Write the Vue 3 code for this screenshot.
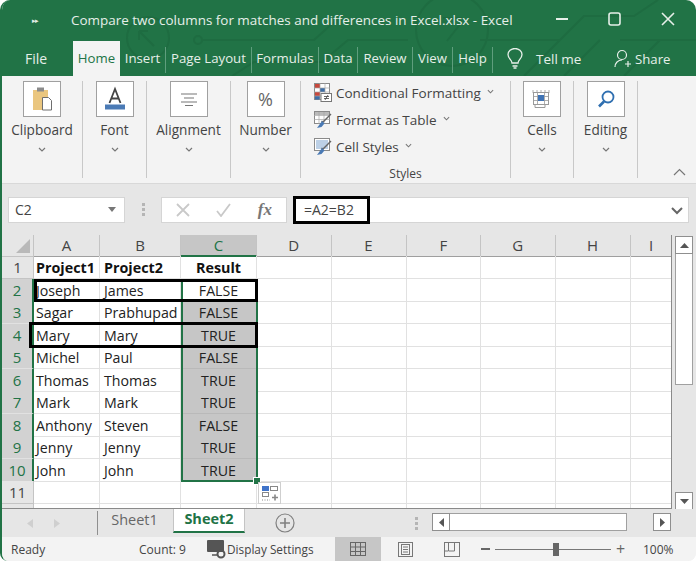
<script setup>
const tabs = ['Insert', 'Page Layout', 'Formulas', 'Data', 'Review', 'View', 'Help']
const headers = ['A', 'B', 'C', 'D', 'E', 'F', 'G', 'H', 'I']
const data = [
  ['Project1', 'Project2', 'Result'],
  ['Joseph', 'James', 'FALSE'],
  ['Sagar', 'Prabhupad', 'FALSE'],
  ['Mary', 'Mary', 'TRUE'],
  ['Michel', 'Paul', 'FALSE'],
  ['Thomas', 'Thomas', 'TRUE'],
  ['Mark', 'Mark', 'TRUE'],
  ['Anthony', 'Steven', 'FALSE'],
  ['Jenny', 'Jenny', 'TRUE'],
  ['John', 'John', 'TRUE'],
  ['', '', ''],
  ['', '', '']
]
const empties = [0, 1, 2, 3, 4, 5]
</script>

<template>
  <div class="window">
    <header class="chrome">
      <svg class="pattern" width="696" height="76" viewBox="0 0 696 76" fill="none" stroke="#1e6c41" stroke-width="2">
        <circle cx="148" cy="38" r="21" />
        <path d="M140 32l14 14M139 31h9M139 31v9" />
        <circle cx="198" cy="40" r="4" />
        <path d="M202 40h112l20 -18M232 76l22-14h68l26-22h60M348 40h50" />
        <circle cx="452" cy="30" r="36" />
        <path d="M443 18h18v5l-14 18M480 40h80l24-24h50l24-16M560 40l-36 36M600 40l-36 36M620 40h76M660 40l-36 36" />
      </svg>
      <div class="titlebar">
        <span class="qat">▸▸</span>
        <span class="doc">Compare two columns for matches and differences in Excel.xlsx  -  Excel</span>
        <svg class="winbtns" width="140" height="22" viewBox="0 0 140 22" fill="none" stroke="#e6efe9" stroke-width="1.6">
          <path d="M0 11h12" stroke-width="2" />
          <rect x="53" y="5" width="11" height="12" rx="2" />
          <path d="M106 5l12 12M118 5l-12 12" />
        </svg>
      </div>
      <nav class="tabs">
        <span class="tab file">File</span>
        <span class="tab home">Home</span>
        <span v-for="t in tabs" :key="t" class="tab sep">{{ t }}</span>
        <span class="tell">
          <svg width="18" height="21" viewBox="0 0 18 21" fill="none" stroke="#e6efe9" stroke-width="1.3">
            <path d="M6 15c0-3-4-4.500-4-8.500a7 6 0 0 1 14 0c0 4-4 5.500-4 8.500zM6.500 18h5M7.500 20h3" />
          </svg>
          <span>Tell me</span>
        </span>
        <span class="share">
          <svg width="18" height="19" viewBox="0 0 18 19" fill="none" stroke="#e6efe9" stroke-width="1.2">
            <circle cx="8" cy="6" r="4.500" />
            <path d="M1 18c0-4 3-7 7-7M11 15h6M14 12v6" />
          </svg>
          <span>Share</span>
        </span>
      </nav>
    </header>

    <section class="ribbon">
      <div class="group">
        <span class="bigbtn">
          <svg width="24" height="26" viewBox="0 0 24 26">
            <rect x="3" y="4" width="15" height="20" fill="#eac67f" />
            <rect x="7" y="1.500" width="7" height="4" fill="#8b8b8b" />
            <path d="M12.500 11.500h6l3 3v9.500h-9z" fill="#fff" stroke="#6e6e6e" />
          </svg>
        </span>
        <span class="label">Clipboard</span>
        <svg class="chev" width="8" height="5" viewBox="0 0 8 5" fill="none" stroke="#777" stroke-width="1.200"><path d="M1 1l3 3 3-3" /></svg>
      </div>
      <div class="group">
        <span class="bigbtn">
          <svg width="24" height="26" viewBox="0 0 24 26">
            <path d="M6.500 17L12 3l5.500 14M8.500 12.500h7" fill="none" stroke="#444" stroke-width="1.800" />
            <rect x="2" y="18.500" width="20" height="5" fill="#4a7ab5" />
          </svg>
        </span>
        <span class="label">Font</span>
        <svg class="chev" width="8" height="5" viewBox="0 0 8 5" fill="none" stroke="#777" stroke-width="1.200"><path d="M1 1l3 3 3-3" /></svg>
      </div>
      <div class="group">
        <span class="bigbtn">
          <svg width="18" height="14" viewBox="0 0 18 14" fill="none" stroke="#777" stroke-width="1.100">
            <path d="M1 2h16M4 6h10M1 10h16M5 13.500h8" />
          </svg>
        </span>
        <span class="label">Alignment</span>
        <svg class="chev" width="8" height="5" viewBox="0 0 8 5" fill="none" stroke="#777" stroke-width="1.200"><path d="M1 1l3 3 3-3" /></svg>
      </div>
      <div class="group">
        <span class="bigbtn pct">%</span>
        <span class="label">Number</span>
        <svg class="chev" width="8" height="5" viewBox="0 0 8 5" fill="none" stroke="#777" stroke-width="1.200"><path d="M1 1l3 3 3-3" /></svg>
      </div>
      <div class="group">
        <div class="styles">
          <div class="style-row">
            <svg width="18" height="19" viewBox="0 0 18 19">
              <rect x="0.500" y="0.500" width="15" height="16" fill="#fff" stroke="#8a8a8a" />
              <rect x="1" y="1" width="5" height="4" fill="#c8483c" /><rect x="6" y="5" width="5" height="4" fill="#3d6ea8" />
              <rect x="1" y="9" width="5" height="4" fill="#c8483c" /><rect x="1" y="13" width="5" height="3.500" fill="#3d6ea8" />
              <path d="M0 5h16M0 9h16M0 13h16M6 0v17M11 0v17" stroke="#a8a8a8" stroke-width="0.700" />
              <rect x="7" y="10.500" width="10.500" height="8" fill="#fff" stroke="#777" />
              <path d="M10 13.500h5M10 15.500h5M11 17l3-5" stroke="#444" stroke-width="0.800" />
            </svg>
            <span>Conditional Formatting</span>
            <svg class="chev" width="7" height="5" viewBox="0 0 8 5" fill="none" stroke="#777" stroke-width="1.200"><path d="M1 1l3 3 3-3" /></svg>
          </div>
          <div class="style-row">
            <svg width="18" height="19" viewBox="0 0 18 19">
              <rect x="0.500" y="1.500" width="15" height="12" fill="#fff" stroke="#8a8a8a" />
              <rect x="1" y="2" width="14" height="3" fill="#bbb" />
              <path d="M0 5.500h16M0 9.500h16M5 2v12M10 2v12" stroke="#a8a8a8" stroke-width="0.700" />
              <path d="M17 4l-8 8-1.500-1" fill="none" stroke="#666" stroke-width="1.400" />
              <path d="M8 11l2.500 2.500-3 3.500-4.500 1z" fill="#4a7ab5" />
            </svg>
            <span>Format as Table</span>
            <svg class="chev" width="7" height="5" viewBox="0 0 8 5" fill="none" stroke="#777" stroke-width="1.200"><path d="M1 1l3 3 3-3" /></svg>
          </div>
          <div class="style-row">
            <svg width="18" height="19" viewBox="0 0 18 19">
              <rect x="0.500" y="1.500" width="15" height="12" fill="#fff" stroke="#8a8a8a" />
              <rect x="2" y="3" width="12" height="9" fill="#bcd0e6" />
              <path d="M17 4l-8 8-1.500-1" fill="none" stroke="#666" stroke-width="1.400" />
              <path d="M8 11l2.500 2.500-3 3.500-4.500 1z" fill="#4a7ab5" />
            </svg>
            <span>Cell Styles</span>
            <svg class="chev" width="7" height="5" viewBox="0 0 8 5" fill="none" stroke="#777" stroke-width="1.200"><path d="M1 1l3 3 3-3" /></svg>
          </div>
        </div>
        <span class="grouplabel">Styles</span>
      </div>
      <div class="group">
        <span class="bigbtn">
          <svg width="20" height="20" viewBox="0 0 20 20">
            <rect x="1.500" y="3.500" width="15" height="12" fill="#fff" stroke="#9a9a9a" />
            <path d="M1 1v3M5 1v3M9 1v3M13 1v3M17 1v3M1 7.500h16M1 11.500h16M5.500 4v12M12.500 4v12" stroke="#9a9a9a" stroke-width="0.800" fill="none" />
            <rect x="6" y="6" width="6" height="6" fill="#3f73b5" />
            <path d="M3 16v2.500h10v-2.500" fill="none" stroke="#9a9a9a" />
          </svg>
        </span>
        <span class="label">Cells</span>
        <svg class="chev" width="8" height="5" viewBox="0 0 8 5" fill="none" stroke="#777" stroke-width="1.200"><path d="M1 1l3 3 3-3" /></svg>
      </div>
      <div class="group">
        <span class="bigbtn">
          <svg width="20" height="20" viewBox="0 0 20 20" fill="none" stroke="#2f6fb0">
            <circle cx="12" cy="8" r="5.500" stroke-width="1.800" />
            <path d="M8 12.500L3 17.500" stroke-width="2.600" />
          </svg>
        </span>
        <span class="label">Editing</span>
        <svg class="chev" width="8" height="5" viewBox="0 0 8 5" fill="none" stroke="#777" stroke-width="1.200"><path d="M1 1l3 3 3-3" /></svg>
      </div>
      <svg class="collapse" width="13" height="8" viewBox="0 0 13 8" fill="none" stroke="#777" stroke-width="1.200"><path d="M1 7l5.500-5.500L12 7" /></svg>
    </section>

    <section class="formula">
      <div class="namebox">
        <span>C2</span>
        <svg width="8" height="5" viewBox="0 0 8 5"><path d="M0 0h8L4 5z" fill="#777" /></svg>
      </div>
      <div class="dots"><i></i><i></i><i></i></div>
      <div class="fbtns">
        <svg width="14" height="14" viewBox="0 0 14 14" fill="none" stroke="#c9c9c9" stroke-width="1.800"><path d="M1 1l12 12M13 1L1 13" /></svg>
        <svg width="16" height="14" viewBox="0 0 16 14" fill="none" stroke="#c9c9c9" stroke-width="1.800"><path d="M1 8l4 5 9-12" /></svg>
        <span class="fx">fx</span>
      </div>
      <div class="finput">
        <span class="ftext">=A2=B2</span>
        <svg class="fchev" width="12" height="8" viewBox="0 0 12 8" fill="none" stroke="#666" stroke-width="2"><path d="M1 1l5 5 5-5" /></svg>
      </div>
    </section>

    <section class="workarea">
      <div class="sheet">
        <div class="row head">
          <div class="rh corner"><span class="tri"></span></div>
          <div v-for="h in headers" :key="h" class="ch" :class="{ csel: h === 'C' }">{{ h }}</div>
        </div>
        <div v-for="(r, i) in data" :key="i" class="row" :class="{ last: i === 11 }">
          <div class="rh" :class="{ rsel: i > 0 && i < 10 }">{{ i === 11 ? '' : i + 1 }}</div>
          <div class="cell col-a" :class="{ strong: i === 0 }">{{ r[0] }}</div>
          <div class="cell col-b" :class="{ strong: i === 0 }">{{ r[1] }}</div>
          <div class="cell center" :class="{ strong: i === 0, filled: i > 1 && i < 10 }">{{ r[2] }}</div>
          <div v-for="e in empties" :key="e" class="cell"></div>
        </div>
        <div class="selection"><span class="handle"></span></div>
        <div class="mark mark1"></div>
        <div class="mark mark2"></div>
        <div class="paste">
          <svg width="18" height="17" viewBox="0 0 18 17">
            <rect x="1" y="1" width="7" height="5" fill="#3f73c9" />
            <rect x="9.500" y="1.500" width="7" height="4" fill="#fff" stroke="#888" />
            <rect x="1.500" y="7.500" width="6" height="4" fill="#fff" stroke="#888" />
            <path d="M1 15h8" stroke="#888" stroke-dasharray="1 1.500" />
            <path d="M11 12.500h6M14 9.500v6" stroke="#888" stroke-width="1.600" />
          </svg>
        </div>
      </div>
      <div class="vscroll">
        <span class="sbtn"><svg width="9" height="5" viewBox="0 0 9 5"><path d="M0 5h9L4.500 0z" fill="#555" /></svg></span>
        <span class="vthumb"></span>
        <span class="vtrack"></span>
        <span class="sbtn"><svg width="9" height="5" viewBox="0 0 9 5"><path d="M0 0h9L4.500 5z" fill="#555" /></svg></span>
      </div>
    </section>

    <section class="sheetbar">
      <div class="navs">
        <svg width="6" height="9" viewBox="0 0 6 9"><path d="M6 0v9L0 4.500z" fill="#cfcfcf" /></svg>
        <svg width="6" height="9" viewBox="0 0 6 9"><path d="M0 0v9l6-4.500z" fill="#cfcfcf" /></svg>
      </div>
      <span class="sheet1">Sheet1</span>
      <span class="sheet2">Sheet2</span>
      <svg class="addsheet" width="20" height="20" viewBox="0 0 20 20" fill="none" stroke="#808080" stroke-width="1.200">
        <circle cx="10" cy="10" r="9" />
        <path d="M10 5v10M5 10h10" stroke-width="1.600" />
      </svg>
      <div class="dots small"><i></i><i></i><i></i></div>
      <div class="hscroll">
        <span class="hbtn"><svg width="5" height="9" viewBox="0 0 5 9"><path d="M5 0v9L0 4.500z" fill="#555" /></svg></span>
        <span class="hthumb"></span>
        <span class="htrack"></span>
        <span class="hbtn"><svg width="5" height="9" viewBox="0 0 5 9"><path d="M0 0v9l5-4.500z" fill="#555" /></svg></span>
      </div>
    </section>

    <footer class="status">
      <span class="ready">Ready</span>
      <span class="count">Count: 9</span>
      <span class="display">
        <svg width="20" height="19" viewBox="0 0 20 19">
          <rect x="0" y="0" width="17" height="12" rx="1" fill="#555" />
          <path d="M5 15h6" stroke="#555" stroke-width="1.500" />
          <circle cx="14" cy="14" r="3.500" fill="none" stroke="#555" stroke-width="2" />
        </svg>
        <span>Display Settings</span>
      </span>
      <span class="view active">
        <svg width="16" height="14" viewBox="0 0 16 14" fill="none" stroke="#666"><rect x="0.500" y="0.500" width="15" height="13" /><path d="M0 5h16M0 9.500h16M5.500 0v14M10.500 0v14" /></svg>
      </span>
      <span class="view">
        <svg width="15" height="15" viewBox="0 0 15 15" fill="none" stroke="#777"><rect x="0.500" y="0.500" width="14" height="14" /><rect x="3.500" y="2.500" width="8" height="10" /><path d="M5 5h5M5 7.500h5M5 10h5" /></svg>
      </span>
      <span class="view">
        <svg width="16" height="15" viewBox="0 0 16 15" fill="none" stroke="#777"><rect x="0.500" y="0.500" width="15" height="14" /><path d="M4.500 0v9h6V0M0 9h4" /></svg>
      </span>
      <span class="zoom">
        <span class="zminus"></span>
        <span class="zline"><i></i></span>
        <span class="zplus">+</span>
      </span>
      <span class="pct100">100%</span>
    </footer>
  </div>
</template>

<style scoped>
* { box-sizing: border-box; }
.window {
  position: relative;
  width: 696px;
  height: 561px;
  border-left: 2px solid #217346;
  border-bottom-left-radius: 8px;
  border-bottom-right-radius: 8px;
  border-top-left-radius: 10px;
  border-top-right-radius: 10px;
  overflow: hidden;
  background: #f3f3f3;
  font-family: "Open Sans", "Noto Sans", sans-serif;
  color: #444;
  display: flex;
  flex-direction: column;
}
.chrome {
  position: relative;
  height: 76px;
  background: #217346;
  color: #e6efe9;
  flex: none;
}
.pattern { position: absolute; left: -2px; top: 0; }
.titlebar { position: relative; height: 41px; display: flex; align-items: center; }
.qat { width: 69px; padding-left: 30px; font-size: 7px; letter-spacing: -1px; }
.doc { font-size: 13.45px; white-space: pre; width: 533px; padding: 0 0 1px 0; margin-left: 3px; }
.winbtns { flex: none; margin-left: -8px; margin-top: -4px; }
.tabs {
  position: relative;
  height: 35px;
  display: grid;
  grid-template-columns: 71px 47px 46px 86px 67px 39px 55px 40px 40px 1fr;
  align-items: center;
  font-size: 13.2px;
}
.tab { height: 26px; line-height: 23px; text-align: center; white-space: nowrap; margin-top: 3px; }
.file { margin-right: 3px; font-size: 14px; }
.home {
  height: 35px;
  line-height: 34px;
  margin-top: 0;
  background: #f3f3f3;
  color: #217346;
}
.tabs .sep:first-of-type { padding-left: 2px; }
.sep { border-right: 1px solid #5f9e7d; }
.tell { display: flex; align-items: center; padding-left: 13px; gap: 12px; font-size: 13.5px; }
.share {
  position: absolute;
  left: 612px;
  top: 8px;
  display: flex;
  align-items: center;
  gap: 3px;
  font-size: 13.2px;
}
.ribbon {
  position: relative;
  height: 108px;
  flex: none;
  display: grid;
  grid-template-columns: 81px 64px 84px 70px 210px 63px 64px 1fr;
  border-bottom: 1px solid #d8d8d8;
  padding-top: 5px;
}
.group {
  height: 97px;
  border-right: 1.5px solid #c8c8c8;
  display: flex;
  flex-direction: column;
  align-items: center;
}
.bigbtn {
  width: 38px;
  height: 36px;
  background: #fff;
  border: 1px solid #a0a0a0;
  display: flex;
  align-items: center;
  justify-content: center;
}
.pct { font-size: 18px; color: #666; }
.label { font-size: 13.6px; margin-top: 3px; line-height: 20px; white-space: nowrap; }
.chev { display: block; margin-top: 7px; flex: none; }
.styles { width: 100%; padding: 0 0 0 13px; margin-top: -2px; flex: 1; }
.style-row { display: flex; align-items: center; height: 27px; font-size: 13.5px; white-space: nowrap; }
.style-row svg:first-child { margin-right: 4px; flex: none; }
.style-row .chev { margin: 0 0 2px 6px; }
.grouplabel { font-size: 12px; line-height: 16px; margin-bottom: -4px; }
.collapse { position: absolute; left: 671px; top: 92px; }
.formula {
  position: relative;
  height: 51px;
  flex: none;
  background: #e6e6e6;
  display: flex;
  align-items: center;
  padding: 0 6px;
}
.namebox {
  width: 117px;
  height: 26px;
  background: #fff;
  border: 1px solid #d5d5d5;
  display: flex;
  align-items: center;
  justify-content: space-between;
  padding: 0 8px 0 6px;
  font-size: 14px;
}
.dots { width: 36px; display: flex; flex-direction: column; align-items: center; gap: 2px; }
.dots i { width: 3px; height: 3px; background: #b5b5b5; }
.fbtns {
  width: 126px;
  height: 26px;
  background: #fff;
  border: 1px solid #d5d5d5;
  display: flex;
  align-items: center;
  justify-content: space-between;
  padding: 0 14px;
}
.fx { font-family: "Liberation Serif", serif; font-style: italic; font-weight: 700; font-size: 17px; color: #777; }
.finput {
  position: relative;
  width: 396px;
  height: 26px;
  margin-left: 6px;
  background: #fff;
  border: 1px solid #d5d5d5;
  font-size: 14px;
}
.ftext {
  position: absolute;
  left: -1px;
  top: -2px;
  width: 77px;
  height: 28px;
  border: 3px solid #000;
  background: #fff;
  padding-left: 8px;
  line-height: 22px;
}
.fchev { position: absolute; right: 5px; top: 9px; }
.workarea { display: flex; height: 274px; flex: none; background: #e6e6e6; }
.sheet {
  position: relative;
  width: 670px;
  height: 274px;
  overflow: hidden;
  background: #fff;
  border-right: 1px solid #8a8a8a;
  border-bottom: 1px solid #8a8a8a;
  flex: none;
}
.row {
  display: grid;
  grid-template-columns: 32px 66px 81px 76px 74.5px 75px 74.5px 74.5px 75px 42px;
  height: 22.5px;
}
.row.head { height: 21px; }
.row.last { height: 6px; overflow: hidden; }
.rh {
  background: #e6e6e6;
  border-right: 1px solid #c4c4c4;
  border-bottom: 1px solid #c4c4c4;
  text-align: center;
  font-size: 15px;
  line-height: 22px;
  color: #444;
}
.rsel { background: #d2d2d2; color: #217346; border-right: 2px solid #217346; border-bottom-color: #e1e1e1; }
.corner { position: relative; }
.tri {
  position: absolute;
  right: 3px;
  bottom: 3px;
  border-style: solid;
  border-width: 0 0 14px 14px;
  border-color: transparent transparent #b9b9b9 transparent;
}
.ch {
  background: #e6e6e6;
  border-right: 1px solid #c4c4c4;
  border-bottom: 1px solid #9f9f9f;
  text-align: center;
  font-size: 15px;
  line-height: 20px;
}
.csel { background: #c6c6c6; color: #217346; border-bottom: 2px solid #217346; }
.cell {
  border-right: 1px solid #e1e1e1;
  border-bottom: 1px solid #e1e1e1;
  font-size: 14.2px;
  line-height: 23px;
  color: #222;
  white-space: nowrap;
  overflow: hidden;
}
.col-a { padding-left: 2px; }
.col-b { padding-left: 4px; }
.center { text-align: center; }
.strong { font-weight: 700; color: #111; font-size: 14.3px; line-height: 24px; }
.filled { background: #c6c6c6; border-bottom-color: #b9b9b9; }
.selection {
  position: absolute;
  left: 179px;
  top: 44px;
  width: 77px;
  height: 203px;
  border: 2px solid #217346;
  pointer-events: none;
}
.handle {
  position: absolute;
  right: -4px;
  bottom: -4px;
  width: 6px;
  height: 6px;
  background: #217346;
  outline: 1px solid #fff;
}
.mark { position: absolute; border: 3px solid #000; }
.mark1 { left: 32px; top: 44px; width: 224px; height: 23px; }
.mark2 { left: 27px; top: 87px; width: 229px; height: 26px; }
.paste {
  position: absolute;
  left: 256px;
  top: 247px;
  width: 23px;
  height: 22px;
  background: #fff;
  border: 1px solid #cfcfcf;
  display: flex;
  align-items: center;
  justify-content: center;
}
.vscroll {
  width: 24px;
  padding: 1px 3px 0 3px;
  display: flex;
  flex-direction: column;
}
.sbtn {
  height: 18px;
  background: #fff;
  border: 1px solid #8f8f8f;
  display: flex;
  align-items: center;
  justify-content: center;
  flex: none;
}
.vthumb { height: 131px; background: #fff; border: 1px solid #a0a0a0; border-top: none; flex: none; }
.vtrack { height: 107px; flex: none; }
.sheetbar {
  position: relative;
  height: 28px;
  flex: none;
  background: #e6e6e6;
  display: flex;
  align-items: flex-start;
}
.navs { width: 96px; height: 24px; display: flex; align-items: center; gap: 21px; padding-left: 25px; border-right: 1px solid #8f8f8f; margin-top: 2px; }
.sheet1 { width: 75px; padding-right: 2px; text-align: center; font-size: 14.5px; color: #666; line-height: 22px; }
.sheet2 {
  width: 72px;
  height: 24px;
  background: #fff;
  color: #217346;
  font-weight: 700;
  font-size: 14.5px;
  text-align: center;
  line-height: 20px;
  border-bottom: 2px solid #217346;
  border-left: 1px solid #c4c4c4;
  border-right: 1px solid #c4c4c4;
}
.addsheet { margin: 4px 0 0 30px; flex: none; }
.dots.small { width: 16px; margin: 8px 0 0 113px; }
.hscroll { display: flex; width: 239px; height: 18px; margin: 4px 0 0 8px; }
.hbtn {
  width: 18px;
  background: #fff;
  border: 1px solid #8f8f8f;
  display: flex;
  align-items: center;
  justify-content: center;
  flex: none;
}
.hthumb { width: 177px; background: #fff; border: 1px solid #a0a0a0; border-left: none; flex: none; }
.htrack { width: 26px; flex: none; }
.status {
  height: 24px;
  flex: none;
  background: #f3f3f3;
  display: flex;
  align-items: center;
  font-size: 12px;
  color: #444;
  white-space: nowrap;
}
.ready { width: 137px; padding-left: 9px; }
.count { width: 68px; }
.display { width: 128px; display: flex; align-items: center; font-size: 11.8px; }
.view { width: 46px; height: 24px; display: flex; align-items: center; justify-content: center; }
.view.active { background: #c6c6c6; }
.view:nth-of-type(5) { padding-left: 2px; }
.view:nth-of-type(6) { padding-left: 4px; }
.zoom { width: 170px; display: flex; align-items: center; padding-left: 8px; }
.zminus { width: 9px; height: 1.5px; background: #666; flex: none; }
.zline { position: relative; width: 116px; height: 1px; background: #777; margin: 0 5px; flex: none; }
.zline i { position: absolute; left: 58px; top: -6px; width: 6px; height: 13px; background: #666; }
.zplus { font-size: 16px; line-height: 16px; color: #666; }
.pct100 { font-size: 12px; }
</style>

<style>
html, body { margin: 0; background: #fff; }
</style>
